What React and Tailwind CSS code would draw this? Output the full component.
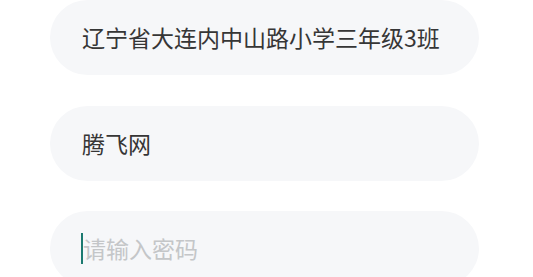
export default function App() {
  return (
    <div
      className="w-[533px] h-[277px] overflow-hidden bg-white flex flex-col gap-[30.5px] pl-[50px] pr-[54px]"
      style={{ fontFamily: '"Noto Sans CJK SC", "Noto Sans", sans-serif' }}
    >
      <div className="h-[75px] shrink-0 rounded-full bg-[#f6f7f9] flex items-center px-[32px]">
        <span className="text-[23px] text-[#363636] leading-none">辽宁省大连内中山路小学三年级3班</span>
      </div>
      <div className="h-[75px] shrink-0 rounded-full bg-[#f6f7f9] flex items-center px-[32px]">
        <span className="text-[23px] text-[#363636] leading-none">腾飞网</span>
      </div>
      <div className="h-[75px] shrink-0 rounded-full bg-[#f6f7f9] flex items-center px-[31px]">
        <span className="w-[2px] h-[31px] bg-[#1c7a70]"></span>
        <span className="text-[23px] text-[#c4c6c8] leading-none">请输入密码</span>
      </div>
    </div>
  );
}
